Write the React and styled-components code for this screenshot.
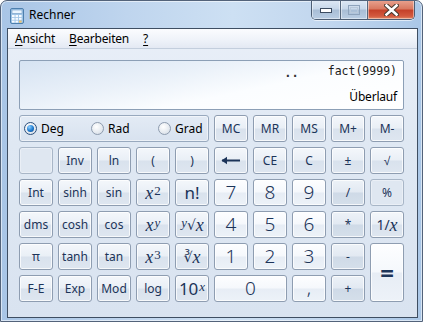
import React from "react";
import styled, { createGlobalStyle, css } from "styled-components";

const GlobalStyle = createGlobalStyle`
  html, body {
    margin: 0;
    padding: 0;
    background: #ffffff;
  }
  body {
    font-family: "Noto Sans", "Open Sans", sans-serif;
  }
`;

// Fensterrahmen
const Window = styled.div`
  box-sizing: border-box;
  width: 423px;
  height: 322px;
  border: 1px solid #53637a;
  border-radius: 7px 7px 0 0;
  background: linear-gradient(90deg, #a8c5e6 0%, #bfd5ee 30%, #cde0f3 55%, #c1d6ee 78%, #aac7e7 100%);
  box-shadow: inset 0 0 0 1px rgba(255, 255, 255, 0.55);
  display: flex;
  flex-direction: column;
  padding: 0 4px 3px 6px;
  overflow: hidden;
`;

const TitleBar = styled.div`
  height: 27px;
  display: flex;
  align-items: flex-start;
  flex-shrink: 0;
`;

const AppIcon = styled.svg`
  margin: 7px 0 0 3px;
  flex-shrink: 0;
`;

const Title = styled.span`
  margin: 6px 0 0 5px;
  font-size: 12px;
  line-height: 16px;
  color: #000000;
  flex: 1;
`;

const Captions = styled.div`
  display: flex;
  margin: -1px 3px 0 0;
  height: 19px;
  border: 1px solid #4c5d73;
  border-top: none;
  border-radius: 0 0 5px 5px;
  overflow: hidden;
  box-shadow: 0 1px 0 rgba(255, 255, 255, 0.6);
`;

const CaptionButton = styled.div`
  width: ${(p) => p.$w}px;
  display: flex;
  align-items: center;
  justify-content: center;
  border-left: ${(p) => (p.$first ? "none" : "1px solid #56677d")};
  box-shadow: inset 0 0 0 1px rgba(255, 255, 255, 0.45);
  ${(p) =>
    p.$close
      ? css`
          background: linear-gradient(180deg, #e9a491 0%, #d97a62 45%, #c5422a 55%, #d35a3f 85%, #e08a66 100%);
        `
      : css`
          background: linear-gradient(180deg, #dfe9f5 0%, #c8d8ea 45%, #a9bed6 55%, #b9cde3 100%);
        `}
`;

// Client-Bereich
const Client = styled.div`
  flex: 1;
  border: 1px solid #3e4e62;
  display: flex;
  flex-direction: column;
  background: linear-gradient(180deg, #e9eff8 0%, #dfe8f3 40%, #d9e3f0 100%);
`;

const MenuBar = styled.div`
  box-sizing: border-box;
  height: 20px;
  display: flex;
  align-items: center;
  gap: 14px;
  padding: 0 0 1px 7px;
  background: linear-gradient(180deg, #fbfcfe 0%, #eef2f9 60%, #e3e9f3 100%);
  border-bottom: 1px solid #c3cedd;
`;

const MenuItem = styled.span`
  font-size: 12px;
  color: #000000;
  letter-spacing: -0.2px;

  u {
    text-decoration: underline;
    text-underline-offset: 2px;
  }
`;

const Content = styled.div`
  padding: 11px 12px 15px 11px;
  display: flex;
  flex-direction: column;
`;

const Display = styled.div`
  box-sizing: border-box;
  width: 385px;
  height: 50px;
  border: 1px solid #8c9fb6;
  border-radius: 2px;
  background: linear-gradient(168deg, #d6e3f2 0%, #eaf1f9 35%, #fbfdff 60%, #ffffff 100%);
  display: flex;
  flex-direction: column;
  align-items: flex-end;
  padding: 3px 6px 0 0;
`;

const ExprLine = styled.div`
  display: flex;
  align-items: baseline;
  gap: 29px;
  height: 17px;
`;

const Dots = styled.span`
  font-family: "DejaVu Sans Mono", monospace;
  font-size: 12px;
  font-weight: bold;
  color: #333333;
  position: relative;
  top: 2px;
`;

const Expr = styled.span`
  font-family: "DejaVu Sans Mono", "Liberation Mono", monospace;
  font-size: 11.5px;
  color: #1a1a1a;
`;

const Result = styled.div`
  margin-top: 7px;
  font-size: 12px;
  color: #000000;
  letter-spacing: -0.2px;
`;

const Pad = styled.div`
  margin-top: 5px;
  display: grid;
  grid-template-columns: repeat(10, 34px);
  grid-auto-rows: 27px;
  gap: 5px;
`;

const RadioGroup = styled.div`
  grid-column: span 5;
  box-sizing: border-box;
  border: 1px solid #98a9be;
  border-radius: 3px;
  background: linear-gradient(180deg, #e3ebf5 0%, #d8e2ef 100%);
  box-shadow: inset 0 0 0 1px rgba(255, 255, 255, 0.5);
  display: grid;
  grid-template-columns: 67px 67px 1fr;
  align-items: center;
  padding-left: 4px;
`;

const RadioLabel = styled.label`
  display: flex;
  align-items: center;
  gap: 4px;
  font-size: 12px;
  color: #000000;
`;

const RadioDot = styled.span`
  box-sizing: border-box;
  width: 13px;
  height: 13px;
  border-radius: 50%;
  border: 1px solid ${(p) => (p.$on ? "#2b4f7c" : "#8d9bae")};
  background: radial-gradient(circle at 40% 35%, #ffffff 0%, #e4e9ef 60%, #cdd5df 100%);
  display: flex;
  align-items: center;
  justify-content: center;

  &::after {
    content: "";
    display: ${(p) => (p.$on ? "block" : "none")};
    width: 7px;
    height: 7px;
    border-radius: 50%;
    background: radial-gradient(circle at 35% 30%, #8fd0ff 0%, #1c7ad0 55%, #0b3f82 100%);
  }
`;

const kinds = {
  fn: css`
    background: linear-gradient(180deg, #f4f7fb 0%, #e9eff6 49%, #d9e2ed 51%, #dee6f0 100%);
    border-color: #8e9db1;
  `,
  num: css`
    background: linear-gradient(180deg, #fdfeff 0%, #f5f8fc 49%, #e7edf5 51%, #edf2f8 100%);
    border-color: #8e9db1;
  `,
  op: css`
    background: linear-gradient(180deg, #edf2f8 0%, #e2e9f2 49%, #cfdae7 51%, #d5dfea 100%);
    border-color: #8e9db1;
  `,
  off: css`
    background: #dfe7f1;
    border-color: #a8b6c7;
    box-shadow: inset 0 0 0 1px rgba(255, 255, 255, 0.35);
  `,
};

const Key = styled.button`
  box-sizing: border-box;
  margin: 0;
  padding: 0;
  border: 1px solid;
  border-radius: 3px;
  box-shadow: inset 0 0 0 1px rgba(255, 255, 255, 0.75);
  color: #1c3459;
  font-family: "Noto Sans", sans-serif;
  font-size: ${(p) => (p.$big ? "19px" : "12px")};
  font-weight: ${(p) => (p.$big ? 300 : 400)};
  line-height: 1;
  display: flex;
  align-items: center;
  justify-content: center;
  grid-column: span ${(p) => p.$cols || 1};
  grid-row: span ${(p) => p.$rows || 1};
  ${(p) => kinds[p.$kind || "fn"]}
`;

const M = styled.span`
  font-family: "Liberation Serif", "DejaVu Serif", serif;
  font-style: italic;
  font-size: 18px;
`;

const Sup = styled.sup`
  font-family: "Liberation Serif", serif;
  font-style: ${(p) => (p.$i ? "italic" : "normal")};
  font-size: 13px;
  line-height: 0;
  position: relative;
  top: -2px;
  margin-left: 1px;
`;

const Root = styled.span`
  font-family: "DejaVu Sans", sans-serif;
  font-size: 14px;
`;

const Big = styled.span`
  font-size: ${(p) => p.$size || 17}px;
`;

const Arrow = () => (
  <svg width="20" height="9" viewBox="0 0 20 9">
    <path d="M1 4.5 L19 4.5" stroke="#1c3459" strokeWidth="2.2" />
    <path d="M0.5 4.5 L6 0.8 L6 8.2 Z" fill="#1c3459" />
  </svg>
);

const CalcIcon = () => (
  <AppIcon width="14" height="16" viewBox="0 0 14 16">
    <rect x="0.5" y="0.5" width="13" height="15" rx="1.5" fill="#9fc4e6" stroke="#4d7fae" />
    <rect x="2" y="2" width="10" height="3.5" fill="#eaf5ff" stroke="#6f98c2" strokeWidth="0.6" />
    {[0, 1, 2].map((r) =>
      [0, 1, 2].map((c) => (
        <rect key={`${r}${c}`} x={2 + c * 3.5} y={7 + r * 2.8} width="2.6" height="2" fill={c === 2 && r === 2 ? "#f2c46b" : "#f7fbff"} />
      ))
    )}
  </AppIcon>
);

const rows = [
  [
    { l: "", k: "off" },
    { l: "Inv" },
    { l: "ln" },
    { l: "(" },
    { l: ")" },
    { l: <Arrow /> },
    { l: "CE" },
    { l: "C" },
    { l: "±" },
    { l: "√" },
  ],
  [
    { l: "Int" },
    { l: "sinh" },
    { l: "sin" },
    { l: (<><M>x</M><Sup>2</Sup></>) },
    { l: <Big>n!</Big> },
    { l: "7", k: "num", big: true },
    { l: "8", k: "num", big: true },
    { l: "9", k: "num", big: true },
    { l: "/", k: "op" },
    { l: "%", k: "off" },
  ],
  [
    { l: "dms" },
    { l: "cosh" },
    { l: "cos" },
    { l: (<><M>x</M><Sup $i>y</Sup></>) },
    { l: (<><Sup $i>y</Sup><Root>√</Root><M>x</M></>) },
    { l: "4", k: "num", big: true },
    { l: "5", k: "num", big: true },
    { l: "6", k: "num", big: true },
    { l: "*", k: "op" },
    { l: (<><Big $size={14}>1/</Big><M>x</M></>) },
  ],
  [
    { l: "π" },
    { l: "tanh" },
    { l: "tan" },
    { l: (<><M>x</M><Sup>3</Sup></>) },
    { l: (<><Root>∛</Root><M>x</M></>) },
    { l: "1", k: "num", big: true },
    { l: "2", k: "num", big: true },
    { l: "3", k: "num", big: true },
    { l: "-", k: "op" },
    { l: <b style={{ fontSize: 24 }}>=</b>, k: "num", rows: 2 },
  ],
  [
    { l: "F-E" },
    { l: "Exp" },
    { l: "Mod" },
    { l: "log" },
    { l: (<><Big>10</Big><Sup $i>x</Sup></>) },
    { l: "0", k: "num", big: true, cols: 2 },
    { l: ",", k: "num", big: true },
    { l: "+", k: "op" },
  ],
];

export default function App() {
  return (
    <>
      <GlobalStyle />
      <Window>
        <TitleBar>
          <CalcIcon />
          <Title>Rechner</Title>
          <Captions>
            <CaptionButton $w={28} $first>
              <svg width="12" height="6" viewBox="0 0 12 6">
                <rect x="0.5" y="1.5" width="11" height="4" fill="#ffffff" stroke="#3b4b60" />
              </svg>
            </CaptionButton>
            <CaptionButton $w={26}>
              <svg width="12" height="10" viewBox="0 0 12 10">
                <rect x="0.5" y="0.5" width="11" height="9" fill="none" stroke="#8ea3bc" />
                <rect x="2.5" y="2.5" width="7" height="5" fill="none" stroke="#b8c8da" />
              </svg>
            </CaptionButton>
            <CaptionButton $w={46} $close>
              <svg width="15" height="12" viewBox="0 0 15 12">
                <path d="M2.5 1.5 L12.5 10.5 M12.5 1.5 L2.5 10.5" stroke="#47392f" strokeWidth="4.6" strokeLinecap="square" />
                <path d="M2.5 1.5 L12.5 10.5 M12.5 1.5 L2.5 10.5" stroke="#ffffff" strokeWidth="2.6" strokeLinecap="square" />
              </svg>
            </CaptionButton>
          </Captions>
        </TitleBar>
        <Client>
          <MenuBar>
            <MenuItem><u>A</u>nsicht</MenuItem>
            <MenuItem><u>B</u>earbeiten</MenuItem>
            <MenuItem><u>?</u></MenuItem>
          </MenuBar>
          <Content>
            <Display>
              <ExprLine>
                <Dots>..</Dots>
                <Expr>fact(9999)</Expr>
              </ExprLine>
              <Result>Überlauf</Result>
            </Display>
            <Pad>
              <RadioGroup>
                <RadioLabel><RadioDot $on />Deg</RadioLabel>
                <RadioLabel><RadioDot />Rad</RadioLabel>
                <RadioLabel><RadioDot />Grad</RadioLabel>
              </RadioGroup>
              {["MC", "MR", "MS", "M+", "M-"].map((m) => (
                <Key key={m} $kind="fn">{m}</Key>
              ))}
              {rows.flat().map((b, i) => (
                <Key key={i} $kind={b.k} $big={b.big} $cols={b.cols} $rows={b.rows}>
                  {b.l}
                </Key>
              ))}
            </Pad>
          </Content>
        </Client>
      </Window>
    </>
  );
}
